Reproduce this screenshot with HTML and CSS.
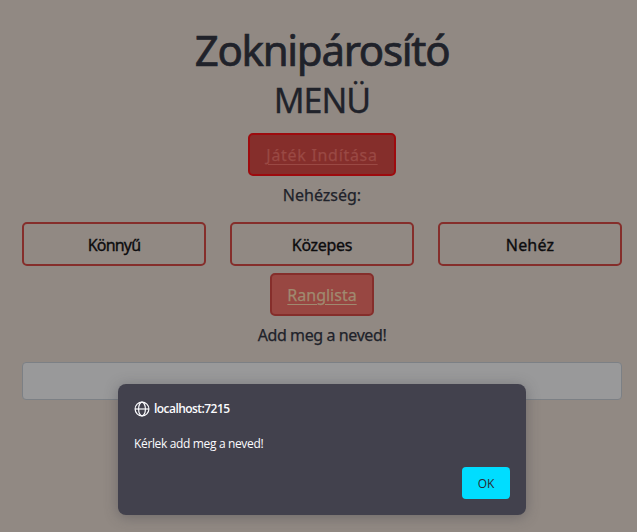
FILE: index.html
```html
<!DOCTYPE html>
<html lang="hu">
<head>
<meta charset="utf-8">
<title>Zoknipárosító</title>
<link rel="stylesheet" href="styles.css">
</head>
<body>
<main class="page">
  <h1 class="title">Zoknipárosító</h1>
  <h2 class="subtitle">MENÜ</h2>
  <a class="btn btn-start"><span class="t-start">Játék Indítása</span></a>
  <p class="label">Nehézség:</p>
  <div class="levels">
    <button class="level t-easy">Könnyű</button>
    <button class="level t-mid">Közepes</button>
    <button class="level t-hard">Nehéz</button>
  </div>
  <a class="btn btn-rank">Ranglista</a>
  <p class="label t-name">Add meg a neved!</p>
  <input class="name-input" type="text">
</main>
<section class="dialog" role="alertdialog">
  <div class="origin">
    <svg class="globe" viewBox="0 0 16 16" fill="none" stroke="#fbfbfe" stroke-width="1.2">
      <circle cx="8" cy="8" r="6.9"/>
      <ellipse cx="8" cy="8" rx="3.4" ry="6.9"/>
      <path d="M1 8H15"/>
    </svg>
    <span class="host">localhost:7215</span>
  </div>
  <p class="message">Kérlek add meg a neved!</p>
  <button class="ok">OK</button>
</section>
</body>
</html>
```
FILE: styles.css
```css
* { box-sizing: border-box; }
body {
  margin: 0;
  height: 532px;
  overflow: hidden;
  background: #918983;
  color: #20222a;
  font: 16px/24px "Comic Sans MS", "Noto Sans", sans-serif;
}
.page {
  display: flex;
  flex-direction: column;
  align-items: center;
  padding: 26px 15px 0 22px;
  -webkit-text-stroke: 0.25px currentColor;
}
h1, h2, p { margin: 0; font-weight: 400; white-space: nowrap; }
.title {
  font-size: 42px;
  line-height: 48px;
  letter-spacing: -1.3px;
  -webkit-text-stroke-width: 0.7px;
}
.subtitle {
  margin-top: 8px;
  font-size: 34px;
  line-height: 36px;
  letter-spacing: -1px;
  -webkit-text-stroke-width: 0.3px;
}
.btn {
  display: flex;
  align-items: center;
  justify-content: center;
  height: 43px;
  border: 2px solid #852e2b;
  border-radius: 5px;
  text-decoration: underline;
  text-decoration-thickness: 1px;
  text-underline-offset: 3px;
  white-space: nowrap;
}
.btn-start { width: 148px; margin-top: 15px; background: #852e2b; border-color: #9d0b0e; color: #9a4944; }
.t-start { letter-spacing: 0.7px; }
.btn-rank { width: 104px; margin-top: 7px; background: #984742; color: #a08a70; }
.label { height: 46px; padding-top: 7px; }
.t-name { letter-spacing: -0.4px; }
.levels {
  display: grid;
  grid-template-columns: repeat(3, 1fr);
  gap: 24px;
  width: 100%;
}
.level {
  height: 44px;
  padding: 2px 0 0;
  border: 2px solid #852e2b;
  border-radius: 5px;
  background: transparent;
  color: #0c0c0e;
  font: inherit;
  -webkit-text-stroke: 0.35px currentColor;
}
.t-easy { letter-spacing: -0.8px; }
.t-mid { letter-spacing: -0.3px; }
.t-hard { letter-spacing: 0.2px; }
.name-input {
  width: 100%;
  height: 38px;
  border: 1px solid #7c8085;
  border-radius: 4px;
  background: #99999a;
}
.dialog {
  position: absolute;
  left: 118px;
  top: 384px;
  width: 408px;
  height: 131px;
  display: flex;
  flex-direction: column;
  padding: 16px;
  border-radius: 8px;
  background: #42414d;
  box-shadow: 0 2px 14px rgba(58, 57, 68, 0.4);
  color: #fbfbfe;
  font: 12px/16px "Segoe UI", "Open Sans", sans-serif;
}
.origin { display: flex; align-items: center; gap: 4px; height: 18px; }
.globe { width: 16px; height: 16px; }
.host { font-weight: 600; letter-spacing: -0.55px; }
.message { margin-top: 18px; letter-spacing: -0.35px; }
.ok {
  align-self: flex-end;
  width: 48px;
  height: 32px;
  margin-top: auto;
  padding: 2px 0 0;
  border: 0;
  border-radius: 4px;
  background: #00ddff;
  color: #2b2a33;
  font: inherit;
}
```
